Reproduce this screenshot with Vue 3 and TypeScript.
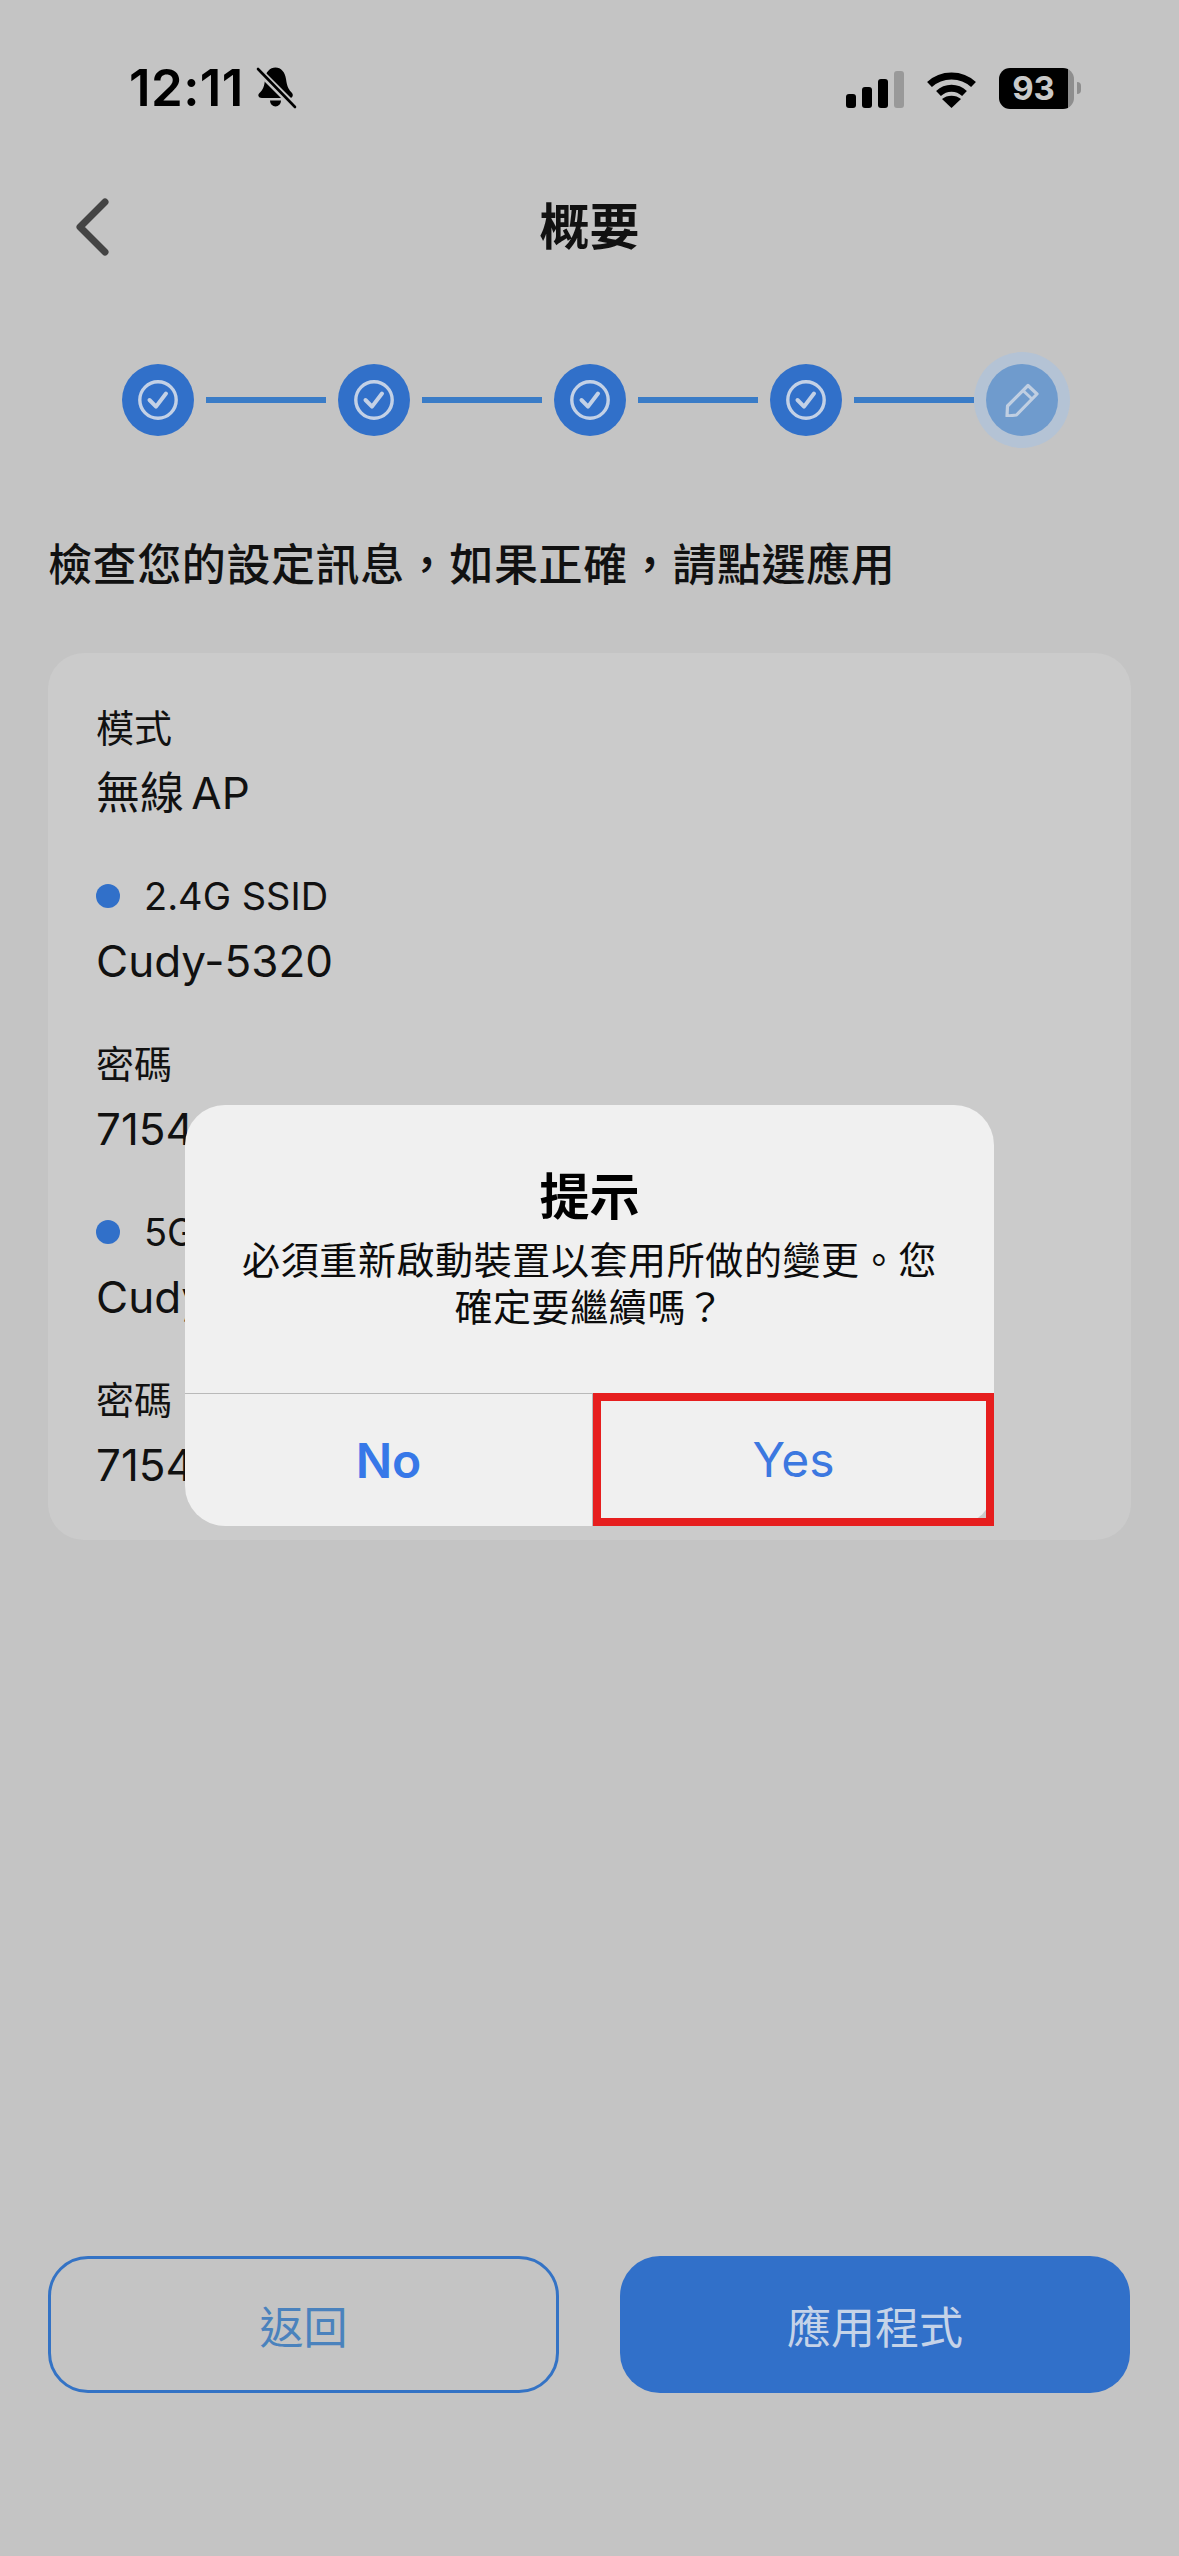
<script setup lang="ts">
interface Row { label: string; value: string; dot: boolean }
const rows: Row[] = [
  { label: '模式', value: '無線 AP', dot: false },
  { label: '2.4G SSID', value: 'Cudy-5320', dot: true },
  { label: '密碼', value: '7154', dot: false },
  { label: '5G SSID', value: 'Cudy-5320', dot: true },
  { label: '密碼', value: '7154', dot: false },
]
const doneSteps = [1, 2, 3, 4]
</script>

<template>
  <div class="page">
    <header class="status">
      <div class="status-left">
        <span class="time">12:11</span>
        <svg class="bell" width="39" height="42" viewBox="0 0 39 42">
          <path d="M18.5 .5C24 .5 28 5 29 12C30 20 32 23 35 26C36.5 27.5 36 31 33 31L5 31C1 31 .5 27.5 2.5 26C6 23 7.5 19 8 12C8.5 5 13 .5 18.5 .5Z" fill="#000" />
          <path d="M13 33.5h11a5.5 6 0 0 1-11 0z" fill="#000" />
          <path d="M-2 0L38 40" stroke="#c4c4c4" stroke-width="7" />
          <path d="M1 2L38 40" stroke="#000" stroke-width="2.6" stroke-linecap="round" />
        </svg>
      </div>
      <div class="status-right">
        <div class="signal">
          <i class="b1"></i><i class="b2"></i><i class="b3"></i><i class="b4"></i>
        </div>
        <svg class="wifi" width="51" height="37" viewBox="0 0 51 37">
          <path d="M3.5 13.5C15.5 2 35.5 2 47.5 13.5" fill="none" stroke="#000" stroke-width="7" stroke-linecap="butt" />
          <path d="M12.5 22.5C20 15.5 31 15.5 38.5 22.5" fill="none" stroke="#000" stroke-width="7" stroke-linecap="butt" />
          <path d="M25.5 37L16 28C21 23.5 30 23.5 35 28Z" fill="#000" />
        </svg>
        <div class="battery">
          <div class="battery-body">
            <span class="battery-fill">93</span>
            <span class="battery-rest"></span>
          </div>
          <span class="battery-nub"></span>
        </div>
      </div>
    </header>

    <nav class="nav">
      <svg class="back" width="40" height="64" viewBox="0 0 40 64">
        <path d="M32 7L7 32L32 57" fill="none" stroke="#444" stroke-width="7" stroke-linecap="round" stroke-linejoin="round" />
      </svg>
      <h1 class="title">概要</h1>
    </nav>

    <div class="stepper">
      <template v-for="s in doneSteps" :key="s">
        <div class="step">
          <svg width="44" height="44" viewBox="0 0 44 44">
            <circle cx="22" cy="22" r="18.2" fill="none" stroke="#c3d1e6" stroke-width="3.4" />
            <path d="M13.5 22L20 28.6L30 15.5" fill="none" stroke="#c3d1e6" stroke-width="4" stroke-linecap="round" stroke-linejoin="round" />
          </svg>
        </div>
        <div class="line"></div>
      </template>
      <div class="step current">
        <svg width="34" height="34" viewBox="-1 -1 34 34">
          <path d="M1 32L1.5 22L22 1.5L31 10L10.5 31Z" fill="none" stroke="#c0cfe2" stroke-width="3.2" stroke-linejoin="round" />
          <path d="M17 6.5L26 15" fill="none" stroke="#c0cfe2" stroke-width="3" />
        </svg>
      </div>
    </div>

    <p class="lead">檢查您的設定訊息，如果正確，請點選應用</p>

    <section class="card">
      <div v-for="(r, i) in rows" :key="i" class="row">
        <div class="label"><span v-if="r.dot" class="dot"></span>{{ r.label }}</div>
        <div class="value">{{ r.value }}</div>
      </div>
    </section>

    <footer class="actions">
      <button class="btn ghost">返回</button>
      <button class="btn solid">應用程式</button>
    </footer>

    <div class="dialog">
      <div class="dialog-text">
        <h2 class="dialog-title">提示</h2>
        <p class="dialog-body">必須重新啟動裝置以套用所做的變更。您確定要繼續嗎？</p>
      </div>
      <div class="dialog-actions">
        <button class="dlg-btn no">No</button>
        <button class="dlg-btn yes">Yes</button>
      </div>
    </div>
  </div>
</template>

<style scoped>
.page {
  position: relative;
  width: 1179px;
  height: 2556px;
  background: #c4c4c4;
  display: flex;
  flex-direction: column;
  overflow: hidden;
  font-family: "Inter", "Noto Sans CJK TC", sans-serif;
  color: #0c0c0c;
}
.status {
  margin-top: 67px;
  padding: 0 98px 0 129px;
  display: flex;
  justify-content: space-between;
  align-items: center;
  box-sizing: border-box;
  height: 42px;
}
.status-left { display: flex; align-items: center; gap: 13px; }
.time { font-size: 51px; font-weight: 600; line-height: 42px; letter-spacing: 0.4px; color: #000; }
.bell { display: block; overflow: visible; }
.status-right { display: flex; align-items: center; }
.signal { display: flex; align-items: flex-end; gap: 6px; height: 37px; margin-top: 2px; }
.signal i { display: block; width: 10px; background: #000; border-radius: 3px; }
.b1 { height: 14px; }
.b2 { height: 21px; }
.b3 { height: 29px; }
.signal .b4 { height: 37px; background: #999; }
.wifi { margin-left: 22px; margin-top: 2px; }
.battery { display: flex; align-items: center; margin-left: 22px; }
.battery-body { width: 75px; height: 41px; display: flex; border-radius: 11px; overflow: hidden; }
.battery-fill {
  width: 69px;
  background: #000;
  color: #c9c9c9;
  font-size: 33px;
  font-weight: 700;
  line-height: 41px;
  text-align: center;
}
.battery-rest { flex: 1; background: #8e8e8e; }
.battery-nub { width: 4px; height: 12px; margin-left: 3px; background: #8e8e8e; border-radius: 0 6px 6px 0; }

.nav {
  position: relative;
  margin-top: 86px;
  height: 64px;
  display: flex;
  justify-content: center;
  align-items: center;
}
.back { position: absolute; left: 73px; top: 0; }
.title { margin: 0; font-size: 50px; font-weight: 700; line-height: 64px; color: #111; }

.stepper {
  margin-top: 105px;
  padding-left: 122px;
  height: 72px;
  display: flex;
  align-items: center;
}
.step {
  width: 72px;
  height: 72px;
  flex: none;
  border-radius: 50%;
  background: #3170c9;
  display: flex;
  align-items: center;
  justify-content: center;
}
.step.current { background: #6f9bcd; box-shadow: 0 0 0 12px #b4c3d5; }
.line { width: 120px; height: 6px; margin: 0 12px; background: #3a7cc7; flex: none; }

.lead {
  margin: 99px 0 0 48px;
  font-size: 44px;
  font-weight: 500;
  line-height: 60px;
  letter-spacing: 0.6px;
  color: #111;
}

.card {
  margin: 58px 48px 0;
  height: 887px;
  box-sizing: border-box;
  padding: 51px 48px 0;
  border-radius: 36px;
  background: #cbcbcb;
}
.row { height: 168px; }
.label {
  height: 48px;
  display: flex;
  align-items: center;
  font-size: 38px;
  line-height: 48px;
  color: #111;
}
.dot { width: 24px; height: 24px; margin-right: 24px; border-radius: 50%; background: #3170c9; flex: none; }
.value { margin-top: 17px; font-size: 44px; line-height: 48px; word-spacing: -5px; color: #111; }

.actions {
  margin-top: auto;
  margin-bottom: 163px;
  padding: 0 49px 0 48px;
  display: flex;
  justify-content: space-between;
}
.btn {
  width: 510px;
  height: 137px;
  box-sizing: border-box;
  border-radius: 40px;
  font-family: inherit;
  font-size: 44px;
  padding: 0;
}
.ghost { width: 511px; background: transparent; border: 3px solid #3473c5; color: #4a82bd; }
.solid { background: #3170c9; border: 0; color: #c5d3e8; }

.dialog {
  position: absolute;
  left: 185px;
  top: 1105px;
  width: 809px;
  height: 421px;
  display: flex;
  flex-direction: column;
  border-radius: 40px;
  background: #f0f0f0;
}
.dialog-text { height: 288px; padding: 60px 56px 0; box-sizing: border-box; text-align: center; }
.dialog-title { margin: 0; font-size: 50px; font-weight: 700; line-height: 64px; color: #000; }
.dialog-body { margin: 8px 0 0; font-size: 38px; line-height: 47px; letter-spacing: 0.6px; color: #0c0c0c; }
.dialog-actions { flex: 1; display: flex; border-top: 1px solid #b9b9b9; }
.dlg-btn {
  background: transparent;
  border: 0;
  padding: 0;
  font-family: inherit;
  font-size: 48px;
  color: #3778e8;
}
.no { width: 408px; flex: none; font-weight: 600; border-right: 1px solid #b9b9b9; }
.yes {
  flex: 1;
  min-width: 0;
  font-weight: 400;
  box-sizing: border-box;
  margin-top: -1px;
  border: 8px solid #e61e1e;
  color: #3c78e0;
}
</style>
